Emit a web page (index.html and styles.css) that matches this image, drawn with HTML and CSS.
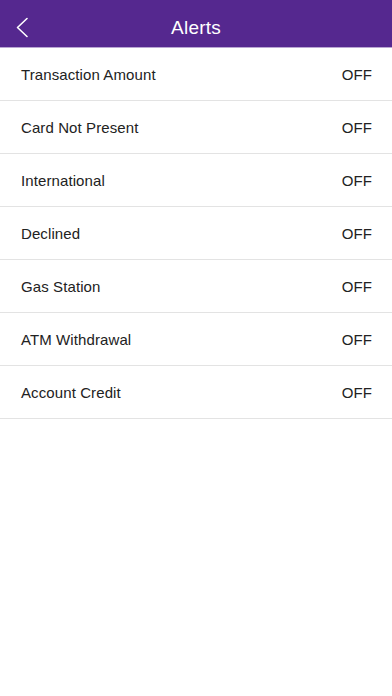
FILE: index.html
```html
<!DOCTYPE html>
<html lang="en">
<head>
  <meta charset="UTF-8">
  <meta name="viewport" content="width=device-width, initial-scale=1.0">
  <title>Alerts</title>
  <link rel="stylesheet" href="styles.css">
</head>
<body>

  <!-- Header -->
  <header class="top-bar">
    <a class="back-button" href="#">
      <svg width="14" height="22" viewBox="0 0 14 22">
        <path d="M12 1.5 L2.5 10.5 L12 19.5" fill="none" stroke="#fff" stroke-width="1.6" stroke-linecap="round" stroke-linejoin="round"/>
      </svg>
    </a>
    <h1>Alerts</h1>
  </header>

  <!-- Alert list -->
  <ul class="alert-list">
    <li class="alert-row"><span>Transaction Amount</span><span class="state">OFF</span></li>
    <li class="alert-row"><span>Card Not Present</span><span class="state">OFF</span></li>
    <li class="alert-row"><span>International</span><span class="state">OFF</span></li>
    <li class="alert-row"><span>Declined</span><span class="state">OFF</span></li>
    <li class="alert-row"><span>Gas Station</span><span class="state">OFF</span></li>
    <li class="alert-row"><span>ATM Withdrawal</span><span class="state">OFF</span></li>
    <li class="alert-row"><span>Account Credit</span><span class="state">OFF</span></li>
  </ul>

</body>
</html>
```

FILE: styles.css
```css
body {
  margin: 0;
  padding: 0;
  background-color: #fff;
  font-family: "Liberation Sans", Arial, sans-serif;
  color: #222;
}

.top-bar {
  position: relative;
  height: 48px;
  padding-top: 8px;
  background-color: #55288f;
  display: flex;
  align-items: center;
  justify-content: center;
  border-bottom: 1px solid #b9a6d2;
  box-sizing: border-box;
}

.top-bar h1 {
  margin: 0;
  color: #fff;
  font-size: 19px;
  font-weight: normal;
  letter-spacing: 0.2px;
}

.back-button {
  position: absolute;
  left: 15px;
  top: 17px;
  display: flex;
}

.alert-list {
  list-style: none;
  margin: 0;
  padding: 0;
}

.alert-row {
  display: flex;
  justify-content: space-between;
  align-items: center;
  height: 53px;
  padding: 0 20px 0 21px;
  border-bottom: 1px solid #e3e3e3;
  box-sizing: border-box;
  font-size: 15px;
  letter-spacing: 0.1px;
}

.alert-row .state {
  font-size: 15px;
}
```
